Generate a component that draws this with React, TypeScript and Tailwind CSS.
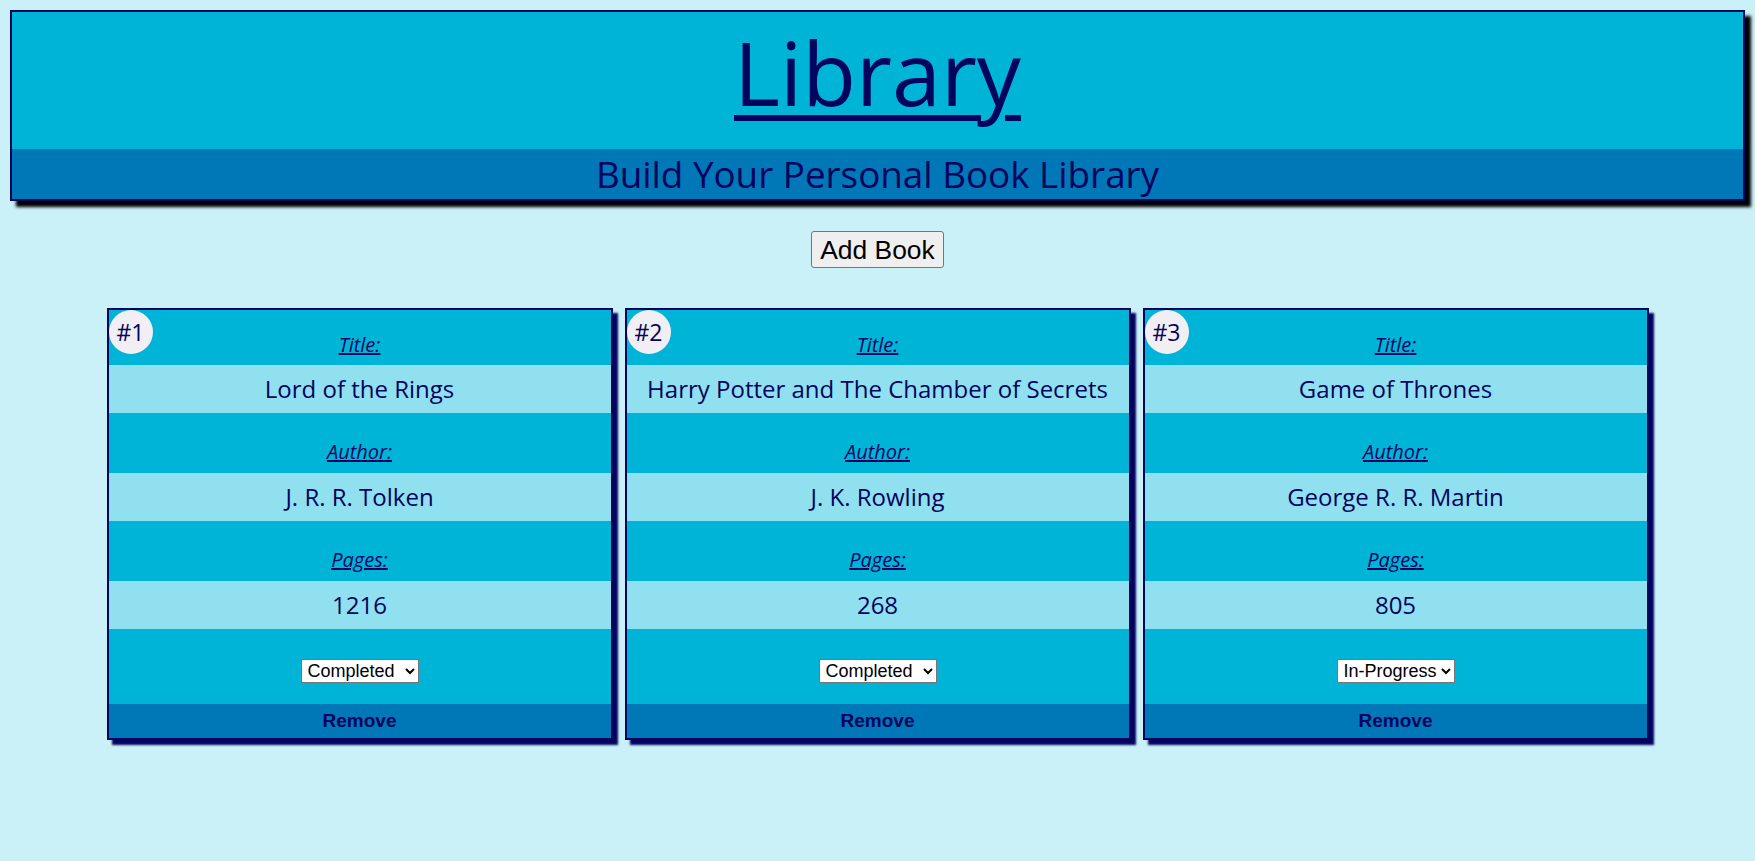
import React from "react";

const books = [
  { id: 1, title: "Lord of the Rings", author: "J. R. R. Tolken", pages: 1216, status: "Completed" },
  { id: 2, title: "Harry Potter and The Chamber of Secrets", author: "J. K. Rowling", pages: 268, status: "Completed" },
  { id: 3, title: "Game of Thrones", author: "George R. R. Martin", pages: 805, status: "In-Progress" },
];

const Label = ({ text, first }: { text: string; first?: boolean }) => (
  <div
    className={`flex items-end justify-center ${first ? "h-[55px] pb-[7px]" : "h-[60px] pb-[8px]"}`}
  >
    <span className="text-[20px] leading-[27px] italic underline">{text}</span>
  </div>
);

const Value = ({ text }: { text: string | number }) => (
  <div className="flex h-[48px] items-center justify-center bg-[#90e0ef] text-[24px]">
    {text}
  </div>
);

const BookCard = ({ book }: { book: (typeof books)[number] }) => {
  return (
    <div className="relative w-[506px] border-2 border-[#03045e] bg-[#00b4d8] shadow-[5px_5px_2px_#03045e]">
      <div className="absolute left-[0px] top-[0px] flex h-[44px] w-[44px] items-center justify-center rounded-full bg-[#f1eef4] text-[23px] font-medium">
        #{book.id}
      </div>
      <Label text="Title:" first />
      <Value text={book.title} />
      <Label text="Author:" />
      <Value text={book.author} />
      <Label text="Pages:" />
      <Value text={book.pages} />
      <div className="flex h-[75px] items-end justify-center pb-[21px]">
        <select
          defaultValue={book.status}
          className="h-[24px] border border-[#767676] bg-white pl-[2px] font-['Liberation_Sans',Arial,sans-serif] text-[18px] font-normal text-black"
        >
          <option>Not Started</option>
          <option>In-Progress</option>
          <option>Completed</option>
        </select>
      </div>
      <button className="flex h-[34px] w-full items-center justify-center bg-[#0077b6] font-['Liberation_Sans',Arial,sans-serif] text-[19px] font-bold text-[#03045e]">
        Remove
      </button>
    </div>
  );
};

export default function App() {
  return (
    <div className="min-h-screen bg-[#caf0f8] pt-[10px] font-['Open_Sans',sans-serif] font-medium text-[#03045e]">
      <header className="mx-[10px] border-2 border-[#03045e] shadow-[6px_6px_3px_#000]">
        <div className="h-[137px] bg-[#00b4d8] text-center">
          <h1 className="text-[88px] leading-[120px] underline underline-offset-[9px] decoration-[6px]">
            Library
          </h1>
        </div>
        <div className="h-[50px] bg-[#0077b6] text-center text-[36.8px] leading-[50px]">
          Build Your Personal Book Library
        </div>
      </header>

      <div className="mt-[30px] flex justify-center">
        <button className="h-[37px] rounded-[3px] border border-[#767676] bg-[#efefef] px-[8px] font-['Liberation_Sans',Arial,sans-serif] text-[26.4px] font-normal leading-[30px] text-black">
          Add Book
        </button>
      </div>

      <div className="mt-[40px] flex justify-center gap-[12px]">
        {books.map((b) => (
          <BookCard key={b.id} book={b} />
        ))}
      </div>
    </div>
  );
}
